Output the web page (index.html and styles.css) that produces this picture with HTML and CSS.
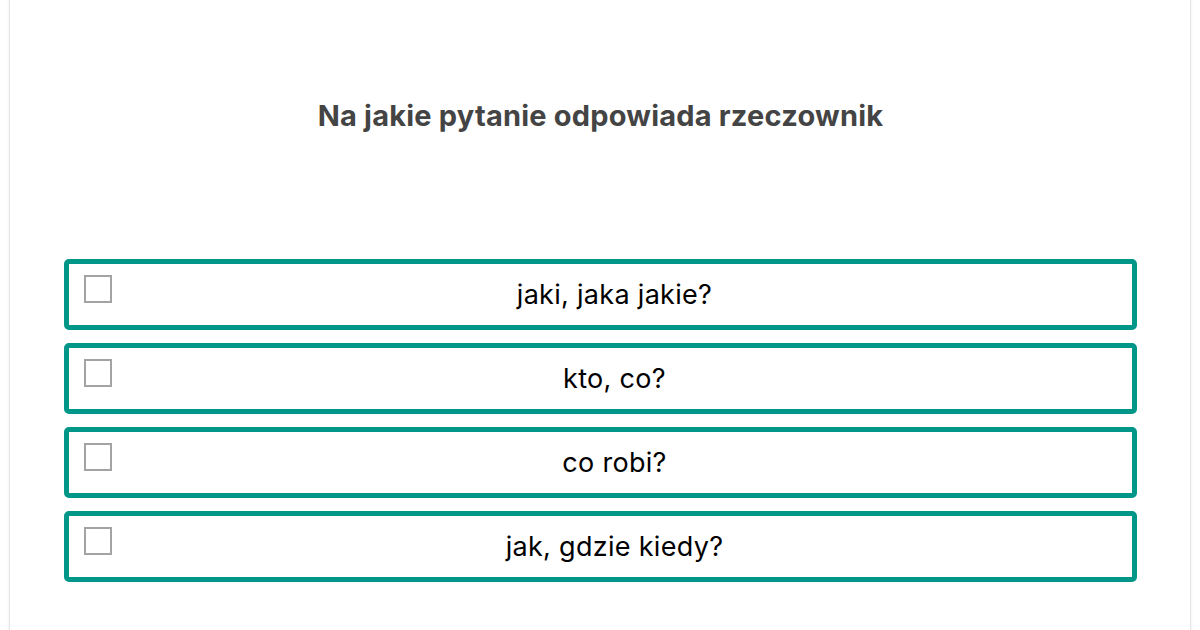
FILE: index.html
```html
<!DOCTYPE html>
<html lang="pl">

<head>
  <meta charset="utf-8" />
  <title>Quiz</title>
  <meta name="viewport" content="width=device-width, initial-scale=1" />
  <link rel="stylesheet" href="styles.css">
</head>

<body>
  <div class="card">
    <h2 class="question">Na jakie pytanie odpowiada rzeczownik</h2>
    <div class="answers">
      <label class="answer">
        <input type="checkbox" />
        <span class="answer-text">jaki, jaka jakie?</span>
      </label>
      <label class="answer">
        <input type="checkbox" />
        <span class="answer-text">kto, co?</span>
      </label>
      <label class="answer">
        <input type="checkbox" />
        <span class="answer-text">co robi?</span>
      </label>
      <label class="answer">
        <input type="checkbox" />
        <span class="answer-text">jak, gdzie kiedy?</span>
      </label>
    </div>
  </div>
</body>

</html>
```

FILE: styles.css
```css
/* Reset */
* {
  box-sizing: border-box;
  padding: 0;
  margin: 0;
}

body {
  background-color: #fff;
  font-family: Inter, "Helvetica Neue", Arial, sans-serif;
  height: 630px;
  overflow: hidden;
}

.card {
  margin: 0 9px;
  height: 100%;
  background-color: #fff;
  border-left: 1px solid #e6e6e6;
  border-right: 1px solid #e6e6e6;
  box-shadow: 0 0 3px rgba(0, 0, 0, 0.08);
  padding: 96px 53px 0 54px;
}

.question {
  text-align: center;
  color: #444;
  font-size: 29px;
  font-weight: 700;
  line-height: 40px;
  letter-spacing: 0.2px;
}

.answers {
  margin-top: 123px;
  display: flex;
  flex-direction: column;
  gap: 13px;
}

.answer {
  display: flex;
  align-items: center;
  height: 71px;
  padding: 0 15px;
  border: 5px solid #009688;
  border-radius: 5px;
  cursor: pointer;
}

.answer input {
  -webkit-appearance: none;
  appearance: none;
  flex: none;
  width: 28px;
  height: 28px;
  border: 2px solid #a3a3a3;
  background-color: #fff;
  align-self: flex-start;
  margin-top: 11px;
}

.answer-text {
  flex: 1;
  text-align: center;
  font-size: 27px;
  letter-spacing: 0.3px;
  color: #000;
}
```
